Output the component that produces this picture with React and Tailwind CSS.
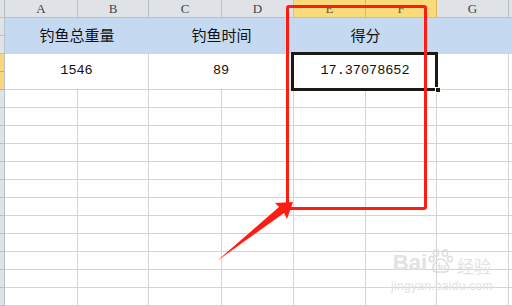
import React from "react";

const cols = [
  { key: "A", w: "w-[73px]" },
  { key: "B", w: "w-[71px]" },
  { key: "C", w: "w-[73px]" },
  { key: "D", w: "w-[72px]" },
  { key: "E", w: "w-[72px]", sel: true },
  { key: "F", w: "w-[71px]", sel: true },
  { key: "G", w: "w-[72px]" },
];

const cjk = { fontFamily: '"Noto Sans CJK SC", "Noto Sans", sans-serif' };
const mono = { fontFamily: '"Liberation Mono", "DejaVu Sans Mono", monospace' };

const ColHeader = () => (
  <div className="flex h-[18px] bg-[#dfe3e8] border-b border-[#b9c0c9]">
    <div className="w-[5px] border-r border-[#b9c0c9]" />
    {cols.map((c) => (
      <div
        key={c.key}
        className={`${c.w} flex items-center justify-center border-r text-[13px] leading-none ${
          c.sel
            ? "bg-[#f9db7c] border-[#e2b45a] text-[#6b5a2a]"
            : "border-[#b9c0c9] text-[#444]"
        }`}
        style={{ fontFamily: '"Liberation Serif", serif' }}
      >
        {c.key}
      </div>
    ))}
    <div className="flex-1" />
  </div>
);

const RowHeader = () => (
  <div className="w-[5px] flex flex-col bg-[#dfe3e8] border-r border-[#b9c0c9]">
    <div className="h-[18px] border-b border-[#b9c0c9]" />
    <div className="h-[18px] border-b border-[#b9c0c9]" />
    <div className="h-[18px] border-b border-[#e2a93c] bg-[#f9d67a]" />
    <div className="h-[18px] border-b border-[#e2a93c] bg-[#f9d67a]" />
    {Array.from({ length: 12 }).map((_, i) => (
      <div key={i} className="h-[18px] border-b border-[#b9c0c9]" />
    ))}
  </div>
);

const Sheet = () => (
  <div className="flex-1 flex flex-col">
    {/* merged title row */}
    <div className="flex h-[36px] bg-[#c5d9f1] border-b border-[#d4d4d4] text-[15px] text-[#111]" style={cjk}>
      <div className="w-[144px] flex items-center justify-center">钓鱼总重量</div>
      <div className="w-[145px] flex items-center justify-center">钓鱼时间</div>
      <div className="w-[143px] flex items-center justify-center">得分</div>
      <div className="flex-1" />
    </div>
    {/* merged data row */}
    <div className="flex h-[36px] border-b border-[#d4d4d4] text-[13.5px] text-[#111]" style={mono}>
      <div className="w-[144px] flex items-center justify-center border-r border-[#d4d4d4]">1546</div>
      <div className="w-[145px] flex items-center justify-center border-r border-[#d4d4d4]">89</div>
      <div className="w-[143px] flex items-center justify-center border-r border-[#d4d4d4]">17.37078652</div>
      <div className="w-[72px] border-r border-[#d4d4d4]" />
      <div className="flex-1" />
    </div>
    {Array.from({ length: 12 }).map((_, i) => (
      <div key={i} className="flex h-[18px] border-b border-[#d4d4d4]">
        {cols.map((c) => (
          <div key={c.key} className={`${c.w} border-r border-[#d4d4d4]`} />
        ))}
        <div className="flex-1" />
      </div>
    ))}
  </div>
);

const Watermark = () => (
  <div className="absolute left-[391px] top-[248px] flex flex-col items-center text-[#e2e2e2] select-none">
    <div className="flex items-end">
      <span className="text-[22px] font-bold leading-none" style={{ fontFamily: '"Liberation Sans", sans-serif' }}>
        Bai
      </span>
      <svg width="26" height="26" viewBox="0 0 26 26" className="mx-[1px]">
        <g fill="none" stroke="#dedede" strokeWidth="1.6">
          <ellipse cx="8" cy="5" rx="2.6" ry="3.2" />
          <ellipse cx="17" cy="5" rx="2.6" ry="3.2" />
          <ellipse cx="3.5" cy="11" rx="2.3" ry="2.8" />
          <ellipse cx="22" cy="11" rx="2.3" ry="2.8" />
          <path d="M12.5 11 C8 11 4 18 5 22 C6 25 10 24 12.5 24 C15 24 19 25 20.5 22 C21.5 18 17 11 12.5 11 Z" />
        </g>
        <text x="12.7" y="22" textAnchor="middle" fontSize="9" fill="#dedede" fontFamily="Liberation Sans, sans-serif" fontWeight="bold">
          du
        </text>
      </svg>
      <span className="text-[17px] leading-none ml-[2px]" style={cjk}>
        经验
      </span>
    </div>
    <div className="text-[12px] leading-none mt-[6px] tracking-[0.3px]" style={{ fontFamily: '"Liberation Sans", sans-serif' }}>
      jingyan.baidu.com
    </div>
  </div>
);

export default function App() {
  return (
    <div className="relative w-[512px] h-[306px] overflow-hidden bg-white">
      <ColHeader />
      <div className="flex">
        <RowHeader />
        <Sheet />
      </div>

      {/* active cell */}
      <div className="absolute left-[291px] top-[52px] w-[147px] h-[39px] border-[3px] border-[#1c1812]" />
      <div className="absolute left-[435px] top-[87px] w-[6px] h-[6px] bg-[#1c1812] border border-white" />

      <Watermark />

      {/* annotation */}
      <div className="absolute left-[286px] top-[5px] w-[141px] h-[205px] border-[3px] border-[#ff1c12] rounded-[3px]" />
      <svg className="absolute inset-0 pointer-events-none" width="512" height="306">
        <polygon points="217,261 279,207 275,203 293,202 287,219 284,213" fill="#ff1c12" />
      </svg>
    </div>
  );
}
